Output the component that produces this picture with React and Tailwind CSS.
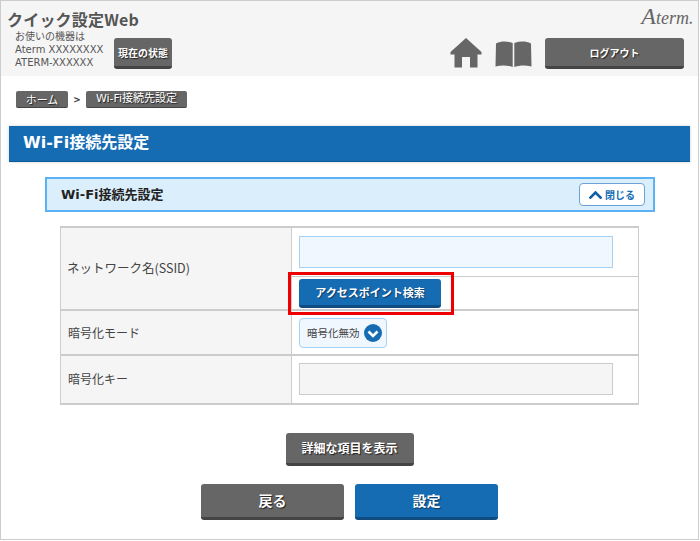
import React from "react";

const font = "font-['Noto_Sans_CJK_JP','DejaVu_Sans',sans-serif]";
const latin = { fontFamily: "'DejaVu Sans','Noto Sans CJK JP',sans-serif" };

function Home() {
  return (
    <svg width="32" height="30" viewBox="0 0 32 30" className="block">
      <path d="M16 0 L31.5 14 L31.5 16.5 L27.5 16.5 L27.5 29.5 L20 29.5 L20 19 L12 19 L12 29.5 L4.5 29.5 L4.5 16.5 L0.5 16.5 L0.5 14 Z" fill="#666" />
    </svg>
  );
}

function Book() {
  return (
    <svg width="37" height="26" viewBox="0 0 37 26" className="block">
      <path d="M1 2.5 C6 0 12 0 17.7 2 L17.7 26 C12 24 6 24 0.5 25.5 Z" fill="#666" />
      <path d="M36 2.5 C31 0 25 0 19.3 2 L19.3 26 C25 24 31 24 36.5 25.5 Z" fill="#666" />
    </svg>
  );
}

export default function App() {
  return (
    <div className={`relative w-[699px] h-[540px] border border-[#ccc] bg-white text-[#444] ${font}`}>
      <header className="h-[75px] bg-[#f5f5f5] flex justify-between">
        <div className="pl-[6px] pt-[8px]">
          <div className="text-[16px] leading-[20px] font-bold text-[#555] whitespace-nowrap tracking-[0.2px]" style={{ fontFamily: "'Noto Sans CJK JP',sans-serif" }}>クイック設定Web</div>
          <div className="flex items-start mt-[1px]">
            <div className="pl-[8px] text-[10px] leading-[13px] text-[#555] whitespace-nowrap w-[107px]" style={latin}>
              <div>お使いの機器は</div>
              <div>Aterm XXXXXXXX</div>
              <div>ATERM-XXXXXX</div>
            </div>
            <button className="mt-[8px] w-[58px] h-[31px] rounded-[3px] bg-[#666] border-b-[3px] border-[#444] text-white text-[10px] font-bold [text-shadow:1px_1px_1px_#222] whitespace-nowrap">現在の状態</button>
          </div>
        </div>
        <div className="flex flex-col items-end pr-[14px]">
          <div className="h-[37px] font-['Liberation_Serif',serif] italic text-[#666] leading-none pt-[3px] mr-[-8px] whitespace-nowrap">
            <span className="text-[24px]">A</span><span className="text-[18px]">term</span><span className="text-[5px] not-italic">●</span>
          </div>
          <div className="flex items-start">
            <div className="mr-[1px]"><Home /></div>
            <div className="ml-[12px] mt-[3px]"><Book /></div>
            <button className="ml-[13px] w-[139px] h-[31px] rounded-[3px] bg-[#666] border-b-[3px] border-[#444] text-white text-[10px] font-bold [text-shadow:1px_1px_1px_#222]">ログアウト</button>
          </div>
        </div>
      </header>

      <nav className="mt-[15px] ml-[15px] h-[17px] flex items-center text-[11px]">
        <span className="w-[52px] h-[17px] flex items-center justify-center bg-[#666] rounded-[2px] border-b border-[#444] text-white [text-shadow:1px_1px_1px_#222]">ホーム</span>
        <span className="w-[18px] text-center text-[#444] font-bold">&gt;</span>
        <span className="w-[101px] h-[17px] flex items-center justify-center bg-[#666] rounded-[2px] border-b border-[#444] text-white whitespace-nowrap [text-shadow:1px_1px_1px_#222]" style={latin}>Wi-Fi接続先設定</span>
      </nav>

      <h1 className="mt-[18px] ml-[8px] w-[681px] h-[36px] bg-[#166cb3] border-b border-[#0d5a99] pl-[14px] pb-[2px] flex items-center text-[16px] font-bold text-white shadow-[0_0_3px_#ccc]" style={latin}>Wi-Fi接続先設定</h1>

      <section className="mt-[15px] ml-[44px] w-[610px] h-[35px] bg-[#dbeefc] border-2 border-[#5ab1f4] flex items-center justify-between pl-[14px] pr-[8px]">
        <span className="text-[13px] font-bold text-[#222] whitespace-nowrap" style={latin}>Wi-Fi接続先設定</span>
        <button className="w-[66px] h-[23px] rounded-[4px] bg-white border border-[#6ba3d6] flex items-center justify-center gap-[3px] text-[10px] font-bold text-[#166cb3]">
          <svg width="13" height="8" viewBox="0 0 13 8"><path d="M0.5 7.5 L6.5 1.5 L12.5 7.5" fill="none" stroke="#0f5ea3" strokeWidth="2.6" /></svg>
          閉じる
        </button>
      </section>

      <div className="mt-[14px] ml-[59px] w-[579px] border border-[#ccc] border-t-2 border-b-2 text-[12px] text-[#444]">
        <div className="flex h-[83px] border-b-2 border-[#ccc]">
          <div className="w-[231px] bg-[#f5f5f5] border-r border-[#ccc] flex items-center pl-[6px] text-[12.5px]">ネットワーク名(SSID)</div>
          <div className="flex-1">
            <div className="h-[49px] border-b border-[#ccc] pl-[7px] pt-[8px]">
              <input className="block w-[314px] h-[32px] bg-[#f0f7ff] border border-[#a3d2f7]" />
            </div>
            <div className="pl-[7px] pt-[2px]">
              <button className="w-[142px] h-[29px] rounded-[3px] bg-[#166cb3] border-b-[3px] border-[#104c80] text-white text-[11px] font-bold [text-shadow:1px_1px_1px_#0a3a66]">アクセスポイント検索</button>
            </div>
          </div>
        </div>
        <div className="flex h-[45px] border-b-2 border-[#ccc]">
          <div className="w-[231px] bg-[#f5f5f5] border-r border-[#ccc] flex items-center pl-[7px] text-[12px]">暗号化モード</div>
          <div className="flex-1 pl-[7px] pt-[7px]">
            <div className="w-[88px] h-[30px] rounded-[4px] bg-[#f0f7ff] border border-[#a3d2f7] flex items-center pl-[7px] gap-[4px] text-[10.5px] text-[#444] whitespace-nowrap">
              暗号化無効
              <svg width="18" height="18" viewBox="0 0 18 18" className="shrink-0">
                <circle cx="9" cy="9" r="9" fill="#166cb3" />
                <path d="M4.5 7.5 L9 12 L13.5 7.5" fill="none" stroke="#fff" strokeWidth="2.6" />
              </svg>
            </div>
          </div>
        </div>
        <div className="flex h-[47px]">
          <div className="w-[231px] bg-[#f5f5f5] border-r border-[#ccc] flex items-center pl-[7px] pb-[2px] text-[12px]">暗号化キー</div>
          <div className="flex-1 pl-[7px] pt-[7px]">
            <input disabled className="block w-[314px] h-[32px] bg-[#f5f5f5] border border-[#ccc]" />
          </div>
        </div>
      </div>

      <div className="absolute left-[287px] top-[271px] w-[166px] h-[43px] border-[3px] border-[#ee0000]" />

      <div className="mt-[28px] flex justify-center pr-[1px]">
        <button className="ml-[1px] w-[128px] h-[33px] rounded-[3px] bg-[#666] border-b-[3px] border-[#444] text-white text-[12px] font-bold [text-shadow:1px_1px_1px_#222]">詳細な項目を表示</button>
      </div>
      <div className="mt-[18px] ml-[200px] flex gap-[11px]">
        <button className="w-[143px] h-[36px] rounded-[3px] bg-[#666] border-b-[3px] border-[#444] text-white text-[14px] font-bold [text-shadow:1px_1px_1px_#222]">戻る</button>
        <button className="w-[143px] h-[36px] rounded-[3px] bg-[#166cb3] border-b-[3px] border-[#104c80] text-white text-[14px] font-bold [text-shadow:1px_1px_1px_#0a3a66]">設定</button>
      </div>
    </div>
  );
}
